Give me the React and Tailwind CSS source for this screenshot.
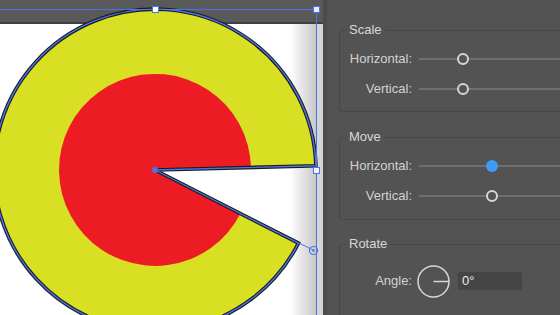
import React from "react";

const BLUE = "#4a74e6";

// Pac-man shaped selection on the artboard
const Artwork = () => {
  const cx = 155;
  const cy = 170;
  const wedge = (r) => {
    const a1 = (27 * Math.PI) / 180;
    const a2 = (-1.5 * Math.PI) / 180;
    const x1 = cx + r * Math.cos(a1);
    const y1 = cy + r * Math.sin(a1);
    const x2 = cx + r * Math.cos(a2);
    const y2 = cy + r * Math.sin(a2);
    return `M${cx},${cy} L${x1.toFixed(1)},${y1.toFixed(1)} A${r},${r} 0 1 1 ${x2.toFixed(1)},${y2.toFixed(1)} Z`;
  };
  const outer = wedge(161);

  return (
    <svg
      className="absolute inset-0"
      width="323"
      height="315"
      viewBox="0 0 323 315"
    >
      <path d={outer} fill="#d9df22" />
      <path d={wedge(96)} fill="#ed1c24" />
      <path d={outer} fill="none" stroke="#1b1b1b" strokeWidth="3.6" strokeLinejoin="miter" />
      <path d={outer} fill="none" stroke={BLUE} strokeWidth="1.4" />

      {/* bounding box */}
      <line x1="0" y1="9.5" x2="316.5" y2="9.5" stroke={BLUE} strokeWidth="1" />
      <line x1="316.5" y1="9.5" x2="316.5" y2="315" stroke={BLUE} strokeWidth="1" />
      <rect x="152.5" y="6.5" width="6" height="6" fill="#fff" stroke={BLUE} />
      <rect x="313.5" y="6.5" width="6" height="6" fill="#e8ecf8" stroke={BLUE} />
      <rect x="313.5" y="167.5" width="6" height="6" fill="#f4f4f4" stroke={BLUE} />

      {/* center point */}
      <circle cx={cx} cy={cy} r="3" fill={BLUE} />

      {/* corner widget */}
      <line x1="299" y1="243" x2="313" y2="250" stroke={BLUE} strokeWidth="1" />
      <circle cx="313.5" cy="250.5" r="4" fill="none" stroke={BLUE} strokeWidth="1.2" />
      <circle cx="313.5" cy="250.5" r="1.3" fill={BLUE} />
    </svg>
  );
};

const Slider = ({ pos, active }) => (
  <div className="relative flex-1 h-[12px] flex items-center">
    <div className="w-full h-[2px] bg-[#6f6f6f]" />
    {active ? (
      <div
        className="absolute top-0 w-[12px] h-[12px] rounded-full bg-[#3d9cf5]"
        style={{ left: pos }}
      />
    ) : (
      <div
        className="absolute top-0 w-[12px] h-[12px] rounded-full border-2 border-[#d6d6d6] bg-[#535353]"
        style={{ left: pos }}
      />
    )}
  </div>
);

const Row = ({ label, pos, active }) => (
  <div className="flex items-center h-[20px]">
    <span className="w-[73px] pr-[1px] text-right">{label}</span>
    <div className="w-[6px]" />
    <Slider pos={pos} active={active} />
  </div>
);

const Group = ({ title, className, children }) => (
  <fieldset
    className={`w-[240px] border border-[#474747] rounded-[3px] ${className}`}
  >
    <legend className="ml-[6px] px-[3px] leading-4 text-[#d8d8d8]">
      {title}
    </legend>
    {children}
  </fieldset>
);

export default function App() {
  return (
    <div
      className="w-[560px] h-[315px] flex overflow-hidden bg-[#535353] text-[13px] text-[#d2d2d2]"
      style={{ fontFamily: '"Liberation Sans", Arial, sans-serif' }}
    >
      {/* Canvas */}
      <div className="relative w-[323px] h-full shrink-0 flex flex-col">
        <div className="h-[24px] bg-[#595959] border-b-2 border-[#404040]" />
        <div className="flex-1 flex">
          <div className="w-[290px] bg-white" />
          <div className="w-[27px] bg-gradient-to-r from-white to-[#c6c6c6]" />
          <div className="w-[6px] bg-[#d5d5d5]" />
        </div>
        <Artwork />
      </div>

      {/* Transform panel */}
      <div className="flex-1 border-l-4 border-[#4b4b4b] pl-[12px] pt-[22px] overflow-hidden">
        <Group title="Scale" className="pt-[11px] pb-[12px]">
          <div className="flex flex-col gap-[10px]">
            <Row label="Horizontal:" pos={38} />
            <Row label="Vertical:" pos={38} />
          </div>
        </Group>

        <Group title="Move" className="mt-[17px] pt-[11px] pb-[13px]">
          <div className="flex flex-col gap-[10px]">
            <Row label="Horizontal:" pos={67} active />
            <Row label="Vertical:" pos={67} />
          </div>
        </Group>

        <Group title="Rotate" className="mt-[16px] pt-[13px] pb-[20px]">
          <div className="flex items-center h-[32px]">
            <span className="w-[73px] pr-[1px] text-right">Angle:</span>
            <div className="w-[4px]" />
            <svg width="33" height="33" viewBox="0 0 33 33">
              <circle cx="16.5" cy="16.5" r="15.5" fill="none" stroke="#d6d6d6" strokeWidth="1.5" />
              <line x1="16.5" y1="16.5" x2="32" y2="16.5" stroke="#d6d6d6" strokeWidth="1.5" />
            </svg>
            <div className="ml-[8px] w-[64px] h-[18px] bg-[#454545] rounded-[2px] pl-[4px] text-[#ececec] leading-[18px]">
              0°
            </div>
          </div>
        </Group>
      </div>
    </div>
  );
}
